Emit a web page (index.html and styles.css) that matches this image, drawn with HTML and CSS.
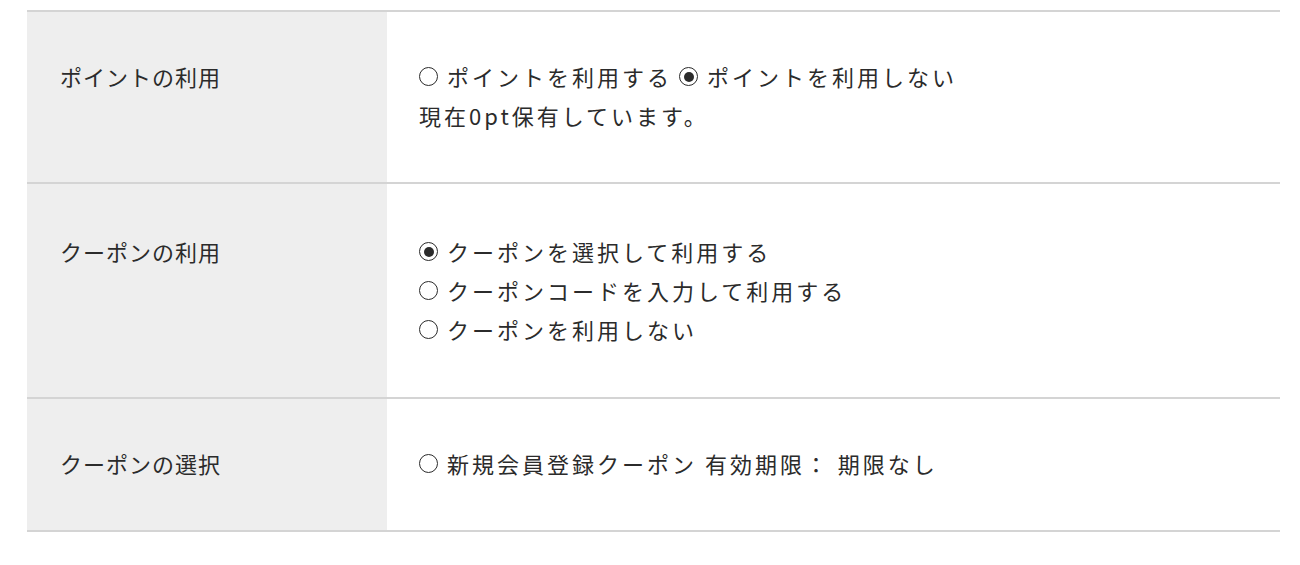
FILE: index.html
```html
<!DOCTYPE html>
<html lang="ja">
<head>
  <meta charset="UTF-8">
  <title>ポイント・クーポン</title>
  <link rel="stylesheet" href="styles.css">
</head>
<body>
  <table class="form-table">
    <tr>
      <th>ポイントの利用</th>
      <td>
        <div class="line">
          <label class="opt"><span class="radio"></span>ポイントを利用する</label>
          <label class="opt"><span class="radio checked"></span>ポイントを利用しない</label>
        </div>
        <div class="line">現在0pt保有しています。</div>
      </td>
    </tr>
    <tr class="tall">
      <th>クーポンの利用</th>
      <td>
        <div class="line"><label class="opt"><span class="radio checked"></span>クーポンを選択して利用する</label></div>
        <div class="line"><label class="opt"><span class="radio"></span>クーポンコードを入力して利用する</label></div>
        <div class="line"><label class="opt"><span class="radio"></span>クーポンを利用しない</label></div>
      </td>
    </tr>
    <tr>
      <th>クーポンの選択</th>
      <td>
        <div class="line"><label class="opt"><span class="radio"></span>新規会員登録クーポン 有効期限： 期限なし</label></div>
      </td>
    </tr>
  </table>
</body>
</html>
```

FILE: styles.css
```css
body {
  margin: 0;
  padding: 10px 20px 0 27px;
  background: #fff;
  color: #2b2b2b;
  font-family: "Noto Sans CJK JP", "Noto Sans", sans-serif;
  font-size: 22px;
}
.form-table {
  width: 1253px;
  border-collapse: collapse;
  border-top: 2px solid #d4d4d4;
}
.form-table tr {
  border-bottom: 2px solid #d4d4d4;
}
.form-table th,
.form-table td {
  vertical-align: top;
  padding: 45px 0 47px 0;
}
.form-table th {
  width: 360px;
  box-sizing: border-box;
  background: #eee;
  font-weight: normal;
  text-align: left;
  padding-left: 33px;
  letter-spacing: 1px;
}
.form-table td {
  padding-left: 32px;
  letter-spacing: 3px;
}
.form-table .line,
.form-table th {
  line-height: 39px;
}
.form-table tr.tall th,
.form-table tr.tall td {
  padding-top: 48px;
  padding-bottom: 48px;
}
.line {
  display: flex;
  align-items: center;
  height: 39px;
}
.opt {
  display: flex;
  align-items: center;
  margin-right: 7px;
}
.radio {
  width: 19px;
  height: 19px;
  border: 1.5px solid #2b2b2b;
  border-radius: 50%;
  margin-right: 9px;
  display: flex;
  align-items: center;
  justify-content: center;
  box-sizing: border-box;
  flex-shrink: 0;
}
.radio.checked::after {
  content: "";
  width: 10px;
  height: 10px;
  border-radius: 50%;
  background: #2b2b2b;
}
```
